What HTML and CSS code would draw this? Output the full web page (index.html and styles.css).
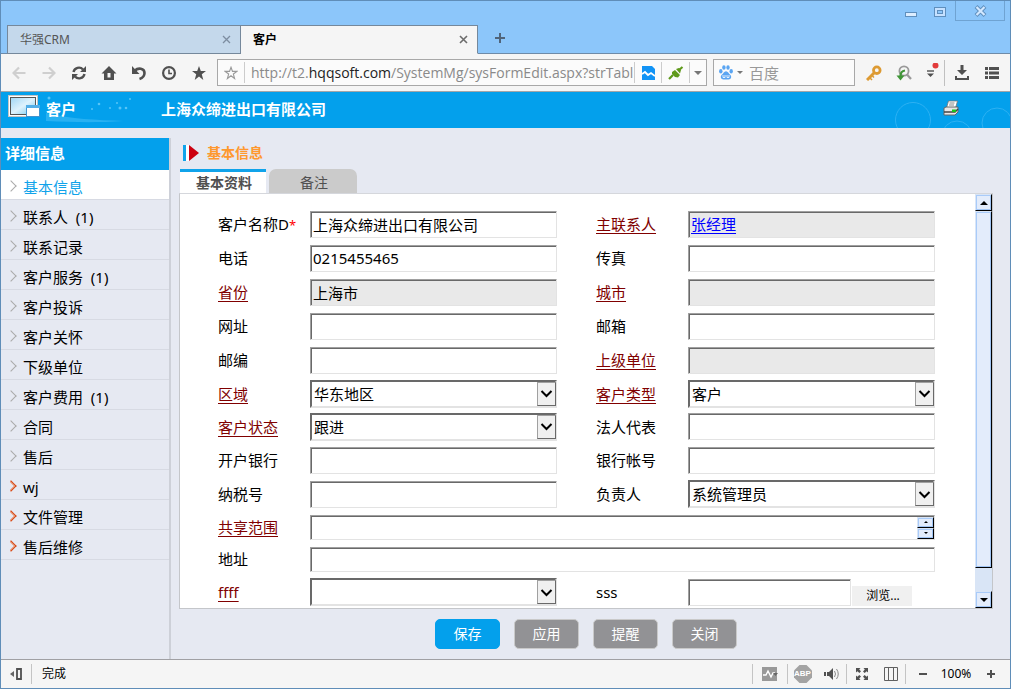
FILE: index.html
```html
<!DOCTYPE html>
<html lang="zh-CN">
<head>
<meta charset="utf-8">
<title>客户</title>
<link rel="stylesheet" href="styles.css">
</head>
<body>
<div class="window">
  <div class="titlebar">
    <div class="tab tab-idle"><span>华强CRM</span>
      <button class="icon-btn tab-x" aria-label="关闭标签"><svg width="9" height="9" viewBox="0 0 9 9"><path d="M1 1l7 7M8 1L1 8" stroke="#7d8da0" stroke-width="1.3"/></svg></button></div>
    <div class="tab tab-current"><span>客户</span>
      <button class="icon-btn tab-x" aria-label="关闭标签"><svg width="9" height="9" viewBox="0 0 9 9"><path d="M1 1l7 7M8 1L1 8" stroke="#6c6c6c" stroke-width="1.6"/></svg></button></div>
    <button class="icon-btn new-tab" aria-label="新建标签"><svg width="12" height="12" viewBox="0 0 12 12"><path d="M6 1v10M1 6h10" stroke="#50647a" stroke-width="2"/></svg></button>
    <div class="win-controls">
      <button class="icon-btn win-min" aria-label="最小化"><svg width="12" height="6" viewBox="0 0 12 6"><rect x=".5" y=".5" width="11" height="4" fill="#dcedff" stroke="#5f8fbd"/></svg></button>
      <button class="icon-btn win-max" aria-label="最大化"><svg width="12" height="10" viewBox="0 0 12 10"><rect x=".5" y=".5" width="11" height="9" fill="#c6e1ff" stroke="#5f8fbd"/><rect x="3.5" y="3.5" width="5" height="3" fill="#8cc6fa" stroke="#5f8fbd"/></svg></button>
      <button class="icon-btn win-close" aria-label="关闭"><svg width="13" height="12" viewBox="0 0 13 12"><path d="M2 1.500l9 9M11 1.500l-9 9" stroke="#5f8fbd" stroke-width="4"/><path d="M2.500 2l8 8M10.500 2l-8 8" stroke="#d3e8ff" stroke-width="2.200"/></svg></button>
    </div>
  </div>

  <div class="toolbar">
    <button class="icon-btn tool" aria-label="后退"><svg width="14" height="14" viewBox="0 0 14 14" fill="none" stroke="#cfcfcf" stroke-width="2.200"><path d="M13.500 7H2M7 1.500L1.500 7 7 12.500"/></svg></button>
    <button class="icon-btn tool" aria-label="前进"><svg width="14" height="14" viewBox="0 0 14 14" fill="none" stroke="#cfcfcf" stroke-width="2.200"><path d="M.5 7H12M7 1.500L12.500 7 7 12.500"/></svg></button>
    <button class="icon-btn tool" aria-label="刷新"><svg width="16" height="16" viewBox="0 0 16 16" fill="none" stroke="#505050" stroke-width="2.400"><path d="M2.500 7A5.500 5.500 0 0 1 12 4.500M13.500 9A5.500 5.500 0 0 1 4 11.500"/><path d="M15 1v6H9zM1 15V9h6z" fill="#505050" stroke="none"/></svg></button>
    <button class="icon-btn tool" aria-label="主页"><svg width="16" height="16" viewBox="0 0 16 16"><path d="M8 1L.5 8.500H3V15h10V8.500h2.500zM6.500 8h3v4.500h-3z" fill="#505050" fill-rule="evenodd"/></svg></button>
    <button class="icon-btn tool" aria-label="恢复"><svg width="16" height="16" viewBox="0 0 16 16" fill="none"><path d="M4 5.500C7 2.500 13.500 3 13.500 8c0 3.500-2 5-5 6" stroke="#505050" stroke-width="2.600"/><path d="M1 1v8h7.500z" fill="#505050"/></svg></button>
    <button class="icon-btn tool" aria-label="历史"><svg width="16" height="16" viewBox="0 0 16 16" fill="none" stroke="#505050"><circle cx="8" cy="8" r="5.900" stroke-width="2.200"/><path d="M8 4.500V8.500h3" stroke-width="1.600"/></svg></button>
    <button class="icon-btn tool" aria-label="收藏夹"><svg width="16" height="16" viewBox="0 0 16 16"><path d="M8 1l1.800 5H15l-4.200 3.200L12.300 15 8 11.500 3.700 15l1.500-5.800L1 6h5.200z" fill="#505050"/></svg></button>

    <div class="address">
      <button class="icon-btn fav" aria-label="收藏"><svg width="14" height="14" viewBox="0 0 16 16"><path d="M8 1.500l1.700 4.700h5l-4 3 1.400 5.100L8 11.200l-4.100 3.100 1.400-5.100-4-3h5z" fill="none" stroke="#999" stroke-width="1.300"/></svg></button>
      <div class="url">http://t2.<b>hqqsoft.com</b>/SystemMg/sysFormEdit.aspx?strTabl</div>
      <button class="icon-btn addr-pic" aria-label="图片模式"><svg width="13" height="14" viewBox="0 0 13 14"><path d="M0 0h10l3 3v11H0z" fill="#1193f5"/><path d="M0 8l3-2 3 3 3-2 4 3" fill="none" stroke="#fff" stroke-width="1.800"/></svg></button>
      <button class="icon-btn addr-plug" aria-label="扩展"><svg width="16" height="14" viewBox="0 0 16 14"><path d="M1 13l4-4M11 4l3.500-3" stroke="#5f9a1b" stroke-width="2.200"/><path d="M4 6l3-2 5 5-2 2.500-3-.5-3-3zM8 3l3-1 2 2-1 3.500z" fill="#5f9a1b"/></svg></button>
      <button class="icon-btn addr-more" aria-label="更多地址"><span class="caret"></span></button>
    </div>

    <div class="search">
      <svg width="14" height="15" viewBox="0 0 14 15" fill="#5aa5f2"><ellipse cx="1.800" cy="6.300" rx="1.700" ry="2.200"/><ellipse cx="4.900" cy="2.500" rx="1.700" ry="2.300"/><ellipse cx="9" cy="2.500" rx="1.700" ry="2.300"/><ellipse cx="12.200" cy="6.300" rx="1.700" ry="2.200"/><path d="M7 6.200c-2 0-2.600 2.300-4.200 3.600C.8 11.500 2 14.500 4.500 14.500h5c2.600 0 3.600-3 1.700-4.700C9.700 8.500 9 6.200 7 6.200z"/><path d="M4 10v2.500h2V10M8 10v2.500h2V10" fill="none" stroke="#fff" stroke-width=".8"/></svg>
      <span class="caret caret-small"></span>
      <input type="text" placeholder="百度" aria-label="搜索">
    </div>

    <button class="icon-btn tool" aria-label="密码"><svg width="16" height="16" viewBox="0 0 16 16"><path d="M1 15l8-8" stroke="#dd9a32" stroke-width="3"/><path d="M4 13l2 2M6 10.500l2 2" stroke="#dd9a32" stroke-width="1.500"/><circle cx="10.800" cy="5.200" r="3.300" fill="none" stroke="#dd9a32" stroke-width="2.800"/></svg></button>
    <button class="icon-btn tool" aria-label="嗅探"><svg width="16" height="16" viewBox="0 0 16 16" fill="none"><circle cx="8" cy="6" r="4.600" stroke="#999" stroke-width="1.800"/><path d="M11 9.500l4 4.500" stroke="#999" stroke-width="2.200"/><path d="M9 5.500C5.500 6 4.500 8.500 4.500 11" stroke="#3f9636" stroke-width="2.200"/><path d="M.5 10.500h8L4.500 15.500z" fill="#3f9636"/></svg></button>
    <button class="icon-btn tool tool-narrow" aria-label="工具菜单"><svg width="14" height="20" viewBox="0 0 14 20"><circle cx="10.500" cy="2.500" r="3" fill="#e23b3b"/><path d="M2 8h7" stroke="#505050" stroke-width="1.400"/><path d="M2 10.500h7L5.500 14z" fill="#505050"/></svg></button>
    <span class="tool-sep"></span>
    <button class="icon-btn tool" aria-label="下载"><svg width="14" height="15" viewBox="0 0 14 15" fill="#505050"><path d="M5.500 0h3v5H12l-5 5-5-5h3.500zM0 11h2v2h10v-2h2v4H0z"/></svg></button>
    <button class="icon-btn tool" aria-label="菜单"><svg width="14" height="14" viewBox="0 0 14 14" fill="#505050"><path d="M0 1h3v3H0zM4 1h10v3H4zM0 5.500h3v3H0zM4 5.500h10v3H4zM0 10h3v3H0zM4 10h10v3H4z"/></svg></button>
  </div>

  <header class="banner">
    <svg class="banner-swoosh" width="90" height="36" viewBox="0 0 90 36"><path d="M0 21c26 6 50 7 78 8-30 2-54 1-78 0z" fill="#4dc1f7" opacity=".5"/><g fill="#8fdcff" opacity=".6"><circle cx="3" cy="6" r="1.500"/><circle cx="53" cy="12" r="1.300"/><circle cx="46" cy="17" r="1"/><circle cx="64" cy="16" r="1"/><circle cx="71" cy="11" r="1"/><circle cx="74" cy="16" r="1.500"/><circle cx="80" cy="16" r="1.300"/><circle cx="84" cy="7" r="1"/></g></svg>
    <svg class="banner-rings" width="115" height="36" viewBox="0 0 115 36" fill="none" stroke="#2db1f3"><circle cx="18" cy="28" r="17.500"/><circle cx="62" cy="44" r="15"/><circle cx="102" cy="31" r="15"/></svg>
    <div class="brand">
      <svg width="32" height="23" viewBox="0 0 32 23"><defs><linearGradient id="scr" x1="0" y1="0" x2="1" y2="1"><stop offset="0" stop-color="#9fd6f5"/><stop offset=".5" stop-color="#def2fd"/><stop offset="1" stop-color="#6cc6ec"/></linearGradient></defs><rect x=".5" y=".5" width="29" height="21" fill="#fff" stroke="#c4c4c4"/><rect x="2.500" y="2.500" width="25" height="17" fill="url(#scr)" stroke="#555"/><rect x="18.500" y="10.500" width="13" height="11" fill="#fff" stroke="#4194cf"/><path d="M18 10h14v3H18z" fill="#52aee8"/></svg>
      <span>客户</span>
    </div>
    <h1>上海众缔进出口有限公司</h1>
    <button class="icon-btn printer" aria-label="打印"><svg width="16" height="16" viewBox="0 0 16 16"><path d="M5.500 1h9l-2 7h-9z" fill="#fff" stroke="#777" stroke-width=".8"/><path d="M6.500 3h5M6 5h5" stroke="#888"/><path d="M1 8l2-1h12v5l-3 3H1z" fill="#e8e8e8" stroke="#666"/><path d="M1 12h11l3-3" stroke="#444" stroke-width="1.500" fill="none"/><path d="M9 9.500h4V12H9z" fill="#18c51c"/></svg></button>
  </header>

  <div class="body">
    <nav class="side">
      <h2>详细信息</h2>
      <a class="side-item side-on" href="#">基本信息</a>
      <a class="side-item" href="#">联系人&nbsp; (1)</a>
      <a class="side-item" href="#">联系记录</a>
      <a class="side-item" href="#">客户服务&nbsp; (1)</a>
      <a class="side-item" href="#">客户投诉</a>
      <a class="side-item" href="#">客户关怀</a>
      <a class="side-item" href="#">下级单位</a>
      <a class="side-item" href="#">客户费用&nbsp; (1)</a>
      <a class="side-item" href="#">合同</a>
      <a class="side-item" href="#">售后</a>
      <a class="side-item side-custom" href="#">wj</a>
      <a class="side-item side-custom" href="#">文件管理</a>
      <a class="side-item side-custom" href="#">售后维修</a>
    </nav>

    <main class="main">
      <h2 class="section-title"><svg width="18" height="18" viewBox="0 0 18 18"><path d="M0 1h3v16H0z" fill="#10a3ea"/><path d="M3 1h3v16H3z" fill="#fff"/><path d="M6 1l10 8-10 8z" fill="#cc0010"/></svg>基本信息</h2>
      <div class="form-tabs">
        <button class="form-tab form-tab-on">基本资料</button>
        <button class="form-tab">备注</button>
      </div>
      <div class="panel">
        <form class="form">
          <div class="row">
            <label for="name">客户名称D<i>*</i></label><input class="box" id="name" type="text" value="上海众缔进出口有限公司">
            <label class="second"><a href="#">主联系人</a></label><div class="box box-off"><a href="#">张经理</a></div>
          </div>
          <div class="row">
            <label for="tel">电话</label><input class="box" id="tel" type="text" value="0215455465">
            <label class="second" for="fax">传真</label><input class="box" id="fax" type="text">
          </div>
          <div class="row">
            <label for="prov"><a href="#">省份</a></label><input class="box box-off" id="prov" type="text" value="上海市" readonly>
            <label class="second" for="city"><a href="#">城市</a></label><input class="box box-off" id="city" type="text" readonly>
          </div>
          <div class="row">
            <label for="web">网址</label><input class="box" id="web" type="text">
            <label class="second" for="mail">邮箱</label><input class="box" id="mail" type="text">
          </div>
          <div class="row">
            <label for="zip">邮编</label><input class="box" id="zip" type="text">
            <label class="second" for="parent"><a href="#">上级单位</a></label><input class="box box-off" id="parent" type="text" readonly>
          </div>
          <div class="row row-33">
            <label for="area"><a href="#">区域</a></label><div class="pick"><select id="area"><option>华东地区</option></select><span class="pick-btn"><svg width="13" height="9" viewBox="0 0 13 9"><path d="M1.500 2l5 5 5-5" fill="none" stroke="#000" stroke-width="2"/></svg></span></div>
            <label class="second" for="type"><a href="#">客户类型</a></label><div class="pick"><select id="type"><option>客户</option></select><span class="pick-btn"><svg width="13" height="9" viewBox="0 0 13 9"><path d="M1.500 2l5 5 5-5" fill="none" stroke="#000" stroke-width="2"/></svg></span></div>
          </div>
          <div class="row row-33">
            <label for="state"><a href="#">客户状态</a></label><div class="pick"><select id="state"><option>跟进</option></select><span class="pick-btn"><svg width="13" height="9" viewBox="0 0 13 9"><path d="M1.500 2l5 5 5-5" fill="none" stroke="#000" stroke-width="2"/></svg></span></div>
            <label class="second" for="legal">法人代表</label><input class="box" id="legal" type="text">
          </div>
          <div class="row">
            <label for="bank">开户银行</label><input class="box" id="bank" type="text">
            <label class="second" for="acct">银行帐号</label><input class="box" id="acct" type="text">
          </div>
          <div class="row">
            <label for="tax">纳税号</label><input class="box" id="tax" type="text">
            <label class="second" for="owner">负责人</label><div class="pick"><select id="owner"><option>系统管理员</option></select><span class="pick-btn"><svg width="13" height="9" viewBox="0 0 13 9"><path d="M1.500 2l5 5 5-5" fill="none" stroke="#000" stroke-width="2"/></svg></span></div>
          </div>
          <div class="row row-32 row-wide">
            <label for="share"><a href="#">共享范围</a></label>
            <div class="box box-low share"><textarea id="share" rows="1"></textarea>
              <span class="spin"><span class="bar-btn"><span class="tri tri-up tri-small"></span></span><span class="bar-btn"><span class="tri tri-down tri-small"></span></span></span></div>
          </div>
          <div class="row row-32 row-wide">
            <label for="addr">地址</label><input class="box box-low" id="addr" type="text">
          </div>
          <div class="row">
            <label for="ffff"><a href="#">ffff</a></label><div class="pick"><select id="ffff"><option></option></select><span class="pick-btn"><svg width="13" height="9" viewBox="0 0 13 9"><path d="M1.500 2l5 5 5-5" fill="none" stroke="#000" stroke-width="2"/></svg></span></div>
            <label class="second" for="sss">sss</label><div class="upload"><input class="box" id="sss" type="text"><button class="browse" type="button">浏览...</button></div>
          </div>
        </form>
        <div class="scrollbar">
          <span class="bar-btn bar-end"><span class="tri tri-up"></span></span>
          <span class="bar-btn bar-thumb"></span>
          <span class="bar-track"></span>
          <span class="bar-btn bar-end"><span class="tri tri-down"></span></span>
        </div>
      </div>
      <div class="actions">
        <button class="act act-main">保存</button>
        <button class="act">应用</button>
        <button class="act">提醒</button>
        <button class="act">关闭</button>
      </div>
    </main>
  </div>

  <footer class="status">
    <button class="icon-btn st-side" aria-label="侧边栏"><svg width="12" height="12" viewBox="0 0 12 12"><path d="M4 3v6L0 6z" fill="#666"/><path d="M7 1h4v10H7z" fill="none" stroke="#505050" stroke-width="1.800"/></svg></button>
    <span class="st-text">完成</span>
    <button class="icon-btn st-rule st-diag" aria-label="诊断"><svg width="16" height="14" viewBox="0 0 16 14"><path d="M0 0h15v14H0z" fill="#999"/><path d="M1 8h3l2-4 3 6 2-4h2" fill="none" stroke="#fff" stroke-width="1.400"/><path d="M11 6h5l-2.500 3z" fill="#666"/></svg></button>
    <button class="icon-btn st-rule st-abp">
      <svg width="18" height="18" viewBox="0 0 18 18"><path d="M5.500 0h7L18 5.500v7L12.500 18h-7L0 12.500v-7z" fill="#a3a3a3"/></svg><span>ABP</span></button>
    <button class="icon-btn st-sound" aria-label="声音"><svg width="15" height="14" viewBox="0 0 15 14"><path d="M0 5h2v4H0zM3 5h2l4-4v12L5 9H3z" fill="#505050"/><path d="M10.500 4q2 3 0 6M12.500 2q3.500 5 0 10" fill="none" stroke="#888"/></svg></button>
    <button class="icon-btn st-rule st-full" aria-label="全屏"><svg width="12" height="12" viewBox="0 0 12 12" fill="#505050"><path d="M0 0h4.500L3.200 1.400 5 3.300 3.400 5 1.400 3.200 0 4.500zM12 0v4.500l-1.400-1.300L8.700 5 7 3.400l1.800-2L7.500 0zM0 12V7.500l1.400 1.300L3.300 7 5 8.600l-1.800 2L4.500 12zM12 12H7.500l1.300-1.400L7 8.700 8.600 7l2 1.800L12 7.500z"/></svg></button>
    <button class="icon-btn st-split" aria-label="分屏"><svg width="14" height="14" viewBox="0 0 14 14"><path d="M.5.5h13v13H.5zM4.500 0v14M9.500 0v14" fill="none" stroke="#606060"/></svg></button>
    <button class="icon-btn st-rule st-minus" aria-label="缩小"><svg width="10" height="10" viewBox="0 0 10 10"><path d="M1 5h8" stroke="#505050" stroke-width="2"/></svg></button>
    <span class="st-zoom">100%</span>
    <button class="icon-btn st-plus" aria-label="放大"><svg width="10" height="10" viewBox="0 0 10 10"><path d="M1 5h8M5 1v8" stroke="#505050" stroke-width="2"/></svg></button>
  </footer>
</div>
</body>
</html>
```
FILE: styles.css
```css
* { box-sizing: border-box; }
body {
  margin: 0;
  font: 15px/20px "Noto Sans", "Noto Sans CJK SC", sans-serif;
  color: #000;
}
h1, h2 { margin: 0; font-size: 15px; line-height: 20px; }
input, select, textarea, button { font: inherit; color: inherit; margin: 0; }
svg { display: block; flex: none; }
.icon-btn {
  display: flex;
  align-items: center;
  justify-content: center;
  flex: none;
  padding: 0;
  border: 0;
  background: none;
}
.window {
  display: flex;
  flex-direction: column;
  min-height: 100vh;
  border: 1px solid #5f8db8;
  background: #e6e9f2;
}

/* Tab strip */
.titlebar {
  display: flex;
  align-items: flex-end;
  height: 53px;
  padding-left: 6px;
  background: #8cc6fa;
  box-shadow: inset 0 -1px #6e8ba8;
}
.tab {
  display: flex;
  align-items: center;
  justify-content: space-between;
  height: 29px;
  padding: 0 9px 0 12px;
  border: 1px solid #75889b;
  font-size: 12px;
}
.tab-idle { width: 234px; background: #c4d8eb; color: #555; }
.tab-current {
  width: 237px;
  border-left: 0;
  border-bottom-color: #f5f5f5;
  background: #f5f5f5;
  font-weight: bold;
}
.new-tab { width: 44px; height: 32px; }
.win-controls { display: flex; align-self: flex-start; margin-left: auto; padding-right: 5px; }
.win-min { width: 29px; height: 27px; }
.win-max { width: 29px; height: 22px; margin-right: 1px; }
.win-close { width: 50px; height: 20px; border: 1px solid #6fa3d2; border-top: 0; }

/* Toolbar */
.toolbar {
  display: flex;
  align-items: center;
  height: 38px;
  padding: 0 3px;
  background: #f5f5f5;
  border-bottom: 1px solid #a2a5a8;
}
.tool { width: 30px; height: 30px; }
.tool-narrow { width: 25px; }
.tool-sep { width: 1px; height: 26px; margin-right: 2px; background: #c0c0c0; }
.address, .search {
  display: flex;
  align-items: center;
  height: 27px;
  border: 1px solid #a8a8a8;
  background: #fbfbfb;
}
.address { flex: 1; min-width: 0; margin: 0 6px 0 3px; }
.address .icon-btn { height: 21px; }
.address .fav { width: 27px; border-right: 1px solid #ccc; }
.url {
  flex: 1;
  min-width: 0;
  padding-left: 6px;
  overflow: hidden;
  white-space: nowrap;
  font-family: "Open Sans", "Noto Sans", sans-serif;
  font-size: 14px;
  color: #8a8a8a;
}
.url b { font-weight: normal; color: #222; }
.address .addr-pic { width: 28px; border: 1px solid #ccc; border-width: 0 1px; }
.address .addr-plug { width: 28px; border-right: 1px solid #ccc; }
.address .addr-more { width: 16px; }
.caret { border: 4px solid transparent; border-top-color: #777; border-bottom: 0; }
.caret-small { border-width: 3px 3px 0; margin: 0 6px 0 4px; }
.search { width: 142px; margin-right: 4px; padding-left: 5px; }
.search input { flex: 1; min-width: 0; padding: 0; border: 0; background: none; }
.search input::placeholder { color: #999; }

/* Page banner */
.banner {
  position: relative;
  display: flex;
  align-items: flex-start;
  height: 36px;
  padding: 3px 51px 0 7px;
  background: #03a0ec;
  color: #fff;
  overflow: hidden;
}
.banner h1 { padding-top: 4px; }
.banner-swoosh { position: absolute; left: 45px; top: 0; }
.banner-rings { position: absolute; right: 0; top: 0; }
.brand { position: relative; display: flex; gap: 6px; width: 153px; font-weight: bold; }
.brand span { padding-top: 4px; }
.printer { position: relative; margin-left: auto; padding-top: 5px; }

/* Body */
.body { display: flex; flex: 1; padding-top: 10px; }
.side { width: 170px; flex: none; border-right: 2px solid #cdd0d8; }
.side h2 { padding: 5px 4px 7px; background: #03a0ec; color: #fff; }
.side-item {
  display: flex;
  align-items: center;
  height: 30px;
  padding: 4px 0 0 21px;
  border-bottom: 1px solid #d7dae3;
  color: #000;
  text-decoration: none;
}
.side-item::before {
  content: "";
  width: 7px;
  height: 7px;
  margin: 0 8px 2px -15px;
  border: solid #aaa;
  border-width: 1px 1px 0 0;
  transform: rotate(45deg);
}
.side-item.side-on { background: #fff; color: #10a3ea; }
.side-custom::before { border-color: #d8430c; box-shadow: inset -1px 1px #e8926e; }

.main {
  display: flex;
  flex-direction: column;
  flex: 1;
  min-width: 0;
  padding: 5px 17px 10px 8px;
}
.section-title {
  display: flex;
  align-items: center;
  gap: 6px;
  padding-left: 4px;
  font-size: 14px;
  color: #ff982e;
}
.form-tabs { display: flex; align-items: flex-end; gap: 3px; height: 30px; padding-left: 1px; }
.form-tab {
  width: 88px;
  height: 24px;
  padding: 4px 0 0 2px;
  border: 0;
  border-radius: 7px 7px 0 0;
  background: #cbcbcb;
  font-size: 14px;
  line-height: 20px;
  color: #505050;
}
.form-tab-on {
  width: 86px;
  padding: 1px 0 0 2px;
  border-top: 3px solid #10a3ea;
  border-radius: 0;
  background: #fff;
  font-weight: bold;
}
.panel {
  display: flex;
  height: 416px;
  border: 1px solid #c4c6ca;
  border-top-color: #d5d7dc;
  background: #fff;
  overflow: hidden;
}
.form { flex: 1; min-width: 0; padding: 13px 40px 0 38px; }
.row {
  display: grid;
  grid-template-columns: 92px minmax(0, 1fr) 131px minmax(0, 1fr);
  align-items: center;
  height: 34px;
}
.row-33 { height: 33px; }
.row-32 { height: 32px; }
.row-wide { grid-template-columns: 92px minmax(0, 1fr); }
.second { padding-left: 39px; }
.row label a { color: #800000; text-decoration: underline; text-underline-offset: 3px; }
.row label i { color: #f00; font-style: normal; font-size: 13px; }
.box {
  width: 100%;
  height: 27px;
  padding: 0 2px;
  border: 1px solid #e3e3e3;
  border-top-color: #a0a0a0;
  border-left-color: #a0a0a0;
  border-radius: 0;
  outline: 0;
  background: #fff;
  box-shadow: inset 1px 1px #696969;
}
.box-low { height: 25px; }
.box-off { background: #e9e9e9; }
div.box-off { line-height: 25px; }
.box-off a { color: #00f; text-underline-offset: 3px; }
.pick { position: relative; }
.pick select {
  display: block;
  width: 100%;
  height: 28px;
  padding: 0 22px 0 2px;
  appearance: none;
  border: 2px solid #e3e3e3;
  border-top-color: #696969;
  border-left-color: #696969;
  border-radius: 0;
  background: #fff;
  line-height: 22px;
}
.pick-btn {
  position: absolute;
  top: 2px;
  right: 1px;
  bottom: 2px;
  width: 19px;
  display: flex;
  align-items: center;
  justify-content: center;
  border: 1px solid #696969;
  border-top-color: #a0a0a0;
  border-left-color: #a0a0a0;
  background: #f0f0f0;
  pointer-events: none;
}
.share { display: flex; padding: 1px 0 0 1px; }
.share textarea { flex: 1; min-width: 0; padding: 0; border: 0; resize: none; overflow: hidden; background: none; }
.spin { display: flex; flex-direction: column; width: 17px; }
.upload { display: flex; align-items: flex-end; gap: 1px; }
.upload .box { flex: 1; min-width: 0; }
.browse {
  width: 60px;
  height: 20px;
  margin-right: 23px;
  padding: 0 0 0 2px;
  border: 0;
  background: #f0f0f0;
  font-size: 12px;
  line-height: 20px;
}

/* Scrollbar */
.scrollbar { display: flex; flex-direction: column; width: 17px; flex: none; background: #d9e5f6; }
.bar-btn {
  display: flex;
  flex: 1;
  align-items: center;
  justify-content: center;
  border: 1px solid #d9e5f6;
  border-right-color: #000;
  border-bottom-color: #000;
  background: #e3ecfb;
  box-shadow: inset 1px 1px #a9cbf9, inset -1px -1px #a0c4f4;
}
.bar-end { flex: none; height: 17px; }
.bar-thumb { flex: 1; }
.bar-track { height: 23px; }
.tri { border: 4px solid transparent; }
.tri-up { border-top: 0; border-bottom-color: #000; }
.tri-down { border-bottom: 0; border-top-color: #000; }
.tri-small { border-left-width: 2px; border-right-width: 2px; }
.tri-small.tri-up { border-bottom-width: 2px; }
.tri-small.tri-down { border-top-width: 2px; }

.actions { display: flex; justify-content: center; gap: 14px; padding-top: 10px; }
.act {
  width: 65px;
  height: 30px;
  padding: 0;
  border: 1px solid #c9c9c9;
  border-radius: 5px;
  background: #929295;
  color: #fff;
  font-size: 14px;
  line-height: 28px;
}
.act-main { border-color: #03a0ec; background: #03a0ec; }

/* Status bar */
.status {
  display: flex;
  align-items: center;
  height: 29px;
  border-top: 1px solid #a0a0a4;
  background: #f5f5f5;
  font-size: 12px;
}
.status .icon-btn { height: 20px; }
.status .st-side { width: 31px; border-right: 1px solid #c4c4c4; }
.st-text { flex: 1; padding-left: 10px; }
.status .st-rule { border-left: 1px solid #c4c4c4; }
.st-diag { width: 35px; }
.st-abp { position: relative; width: 30px; }
.st-abp span {
  position: absolute;
  inset: 0;
  text-align: center;
  font: bold 8px/20px "Liberation Sans", sans-serif;
  color: #fff;
}
.st-sound { width: 29px; }
.st-full { width: 30px; }
.st-split { width: 29px; }
.st-minus { width: 35px; }
.st-zoom { width: 32px; text-align: center; }
.st-plus { width: 38px; }
```
